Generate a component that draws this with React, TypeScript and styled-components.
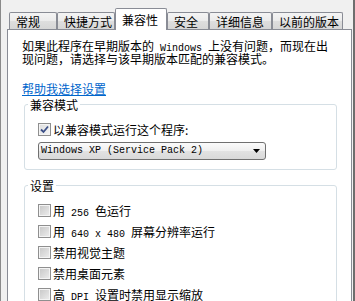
import React from "react";
import styled, { createGlobalStyle } from "styled-components";

const GlobalStyle = createGlobalStyle`
  html, body {
    margin: 0;
    padding: 0;
    background: #f0f0f0;
  }
  body {
    font-family: "Noto Sans CJK SC", "Liberation Sans", sans-serif;
    font-size: 12px;
    color: #000;
  }
`;

const Window = styled.div`
  width: 355px;
  height: 301px;
  box-sizing: border-box;
  border-left: 1px solid #8a8a8a;
  border-right: 2px solid #6e6e6e;
  background: #f0f0f0;
  overflow: hidden;
  display: flex;
  flex-direction: column;
  padding: 8px 0 0 6px;
`;

const TabStrip = styled.div`
  display: flex;
  align-items: flex-start;
  height: 21px;
  padding-left: 2px;
  position: relative;
  z-index: 2;
`;

const Tab = styled.div<{ $active?: boolean; $width: number }>`
  box-sizing: border-box;
  width: ${(p) => p.$width}px;
  height: ${(p) => (p.$active ? 22 : 17)}px;
  margin-top: ${(p) => (p.$active ? 0 : 4)}px;
  padding-left: 6px;
  display: flex;
  align-items: center;
  line-height: 13px;
  white-space: nowrap;
  border: 1px solid #898c95;
  border-bottom: none;
  border-radius: 2px 2px 0 0;
  background: ${(p) =>
    p.$active
      ? "#ffffff"
      : "linear-gradient(#f4f4f4, #ebebeb 50%, #dedede 51%, #d6d6d6)"};
  padding-bottom: ${(p) => (p.$active ? 1 : 0)}px;
`;

const Panel = styled.div`
  width: 345px;
  flex: 1;
  box-sizing: border-box;
  background: #ffffff;
  border: 1px solid #898c95;
  border-bottom: none;
  padding: 9px 0 0 14px;
  position: relative;
  z-index: 1;
`;

const Intro = styled.p`
  margin: 0;
  line-height: 13px;
  white-space: nowrap;
`;

// latin words inside the chinese text; line-height 0 keeps the line box at 13px
const Mono = styled.span`
  font-family: "Liberation Mono", "DejaVu Sans Mono", monospace;
  font-size: 10px;
  line-height: 0;
`;

const HelpLink = styled.a`
  display: inline-block;
  margin-top: 17px;
  line-height: 13px;
  color: #0066cc;
  text-decoration: underline;
  cursor: pointer;
`;

const Group = styled.fieldset<{ $gapTop: number; $padTop: number }>`
  box-sizing: border-box;
  width: 313px;
  margin: ${(p) => p.$gapTop}px 0 0 2px;
  padding: ${(p) => p.$padTop}px 0 9px 13px;
  border: 1px solid #d5dfe5;
  border-radius: 3px;
  min-inline-size: 0;
  display: flex;
  flex-direction: column;
`;

const Legend = styled.legend`
  padding: 0 2px;
  margin-left: -10px;
  line-height: 13px;
`;

const OptionList = styled.div`
  display: flex;
  flex-direction: column;
  gap: 8px;
`;

const Row = styled.label`
  display: flex;
  align-items: center;
  gap: 2px;
  height: 13px;
  line-height: 13px;
  white-space: nowrap;
`;

const Box = styled.span<{ $checked?: boolean }>`
  box-sizing: border-box;
  width: 13px;
  height: 13px;
  flex: none;
  display: flex;
  align-items: center;
  justify-content: center;
  border: 1px solid #8f8f8f;
  box-shadow: inset 0 0 0 1px #f4f4f4;
  background: ${(p) =>
    p.$checked
      ? "linear-gradient(135deg, #dcdcdc, #f7f7f7)"
      : "linear-gradient(135deg, #c6c6c6, #eeeeee)"};
`;

const Select = styled.div`
  box-sizing: border-box;
  width: 228px;
  height: 18px;
  margin-top: 6px;
  padding: 0 5px 0 2px;
  display: flex;
  align-items: center;
  justify-content: space-between;
  border: 1px solid #707070;
  border-radius: 3px;
  background: linear-gradient(#fbfbfb, #efefef 50%, #e2e2e2 51%, #d9d9d9);
`;

const SelectText = styled.span`
  font-family: "Liberation Mono", "DejaVu Sans Mono", monospace;
  font-size: 10px;
  line-height: 16px;
  white-space: pre;
`;

const Checkbox: React.FC<{ checked?: boolean; children: React.ReactNode }> = ({
  checked,
  children,
}) => (
  <Row>
    <Box $checked={checked}>
      {checked && (
        <svg width="9" height="9" viewBox="0 0 9 9">
          <path
            d="M1 4.5 L3.5 7 L8 1.5"
            fill="none"
            stroke="#3b4f87"
            strokeWidth="1.8"
          />
        </svg>
      )}
    </Box>
    <span>{children}</span>
  </Row>
);

const tabs = [
  { label: "常规", width: 48 },
  { label: "快捷方式", width: 58 },
  { label: "兼容性", width: 52, active: true },
  { label: "安全", width: 42 },
  { label: "详细信息", width: 63 },
  { label: "以前的版本", width: 71 },
];

export default function App() {
  return (
    <>
      <GlobalStyle />
      <Window>
        <TabStrip>
          {tabs.map((t) => (
            <Tab key={t.label} $active={t.active} $width={t.width}>
              {t.label}
            </Tab>
          ))}
        </TabStrip>
        <Panel>
          <Intro>
            如果此程序在早期版本的<Mono> Windows </Mono>上没有问题，而现在出
            <br />
            现问题，请选择与该早期版本匹配的兼容模式。
          </Intro>
          <HelpLink>帮助我选择设置</HelpLink>

          <Group $gapTop={1} $padTop={12}>
            <Legend>兼容模式</Legend>
            <Checkbox checked>以兼容模式运行这个程序:</Checkbox>
            <Select>
              <SelectText>Windows XP (Service Pack 2)</SelectText>
              <svg width="7" height="4" viewBox="0 0 7 4">
                <polygon points="0,0 7,0 3.5,4" fill="#000" />
              </svg>
            </Select>
          </Group>

          <Group $gapTop={9} $padTop={12}>
            <Legend>设置</Legend>
            <OptionList>
              <Checkbox>
                用<Mono> 256 </Mono>色运行
              </Checkbox>
              <Checkbox>
                用<Mono> 640 x 480 </Mono>屏幕分辨率运行
              </Checkbox>
              <Checkbox>禁用视觉主题</Checkbox>
              <Checkbox>禁用桌面元素</Checkbox>
              <Checkbox>
                高<Mono> DPI </Mono>设置时禁用显示缩放
              </Checkbox>
            </OptionList>
          </Group>
        </Panel>
      </Window>
    </>
  );
}
